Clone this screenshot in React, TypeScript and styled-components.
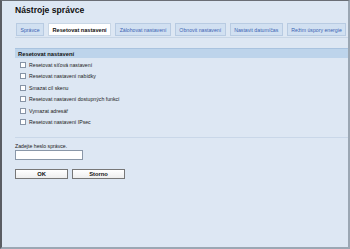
import styled, { createGlobalStyle } from "styled-components";

const GlobalStyle = createGlobalStyle`
  html, body {
    margin: 0;
    padding: 0;
    background: #dde7f3;
  }
  body {
    font-family: "Liberation Sans", Arial, sans-serif;
  }
`;

const Frame = styled.div`
  box-sizing: border-box;
  width: 350px;
  height: 249px;
  background: #dde7f3;
  border-left: 2px solid #5a5d63;
  border-top: 1px solid #6a6e75;
  border-right: 2px solid #9ba7b3;
  border-bottom: 2px solid #9ba7b3;
  padding: 4px 0 0 13px;
  display: flex;
  flex-direction: column;
`;

const Title = styled.h1`
  margin: 0;
  font-size: 8.6px;
  font-weight: bold;
  color: #111;
  line-height: 11px;
  height: 18px;
`;

const TabBar = styled.div`
  display: flex;
  gap: 4px;
  padding-left: 1px;
  height: 14px;
  border-bottom: 1px solid #c8d6e6;
`;

const Tab = styled.div<{ $active?: boolean }>`
  box-sizing: border-box;
  height: 13px;
  padding: 0 3.5px;
  display: flex;
  align-items: center;
  font-size: ${(p) => (p.$active ? "5.6px" : "5.2px")};
  font-weight: ${(p) => (p.$active ? "bold" : "normal")};
  color: ${(p) => (p.$active ? "#111" : "#3b63b3")};
  background: ${(p) => (p.$active ? "#ffffff" : "#d1e0f1")};
  border: 1px solid ${(p) => (p.$active ? "#c9d7e6" : "#b8cbe2")};
  white-space: nowrap;
`;

const SectionBar = styled.div`
  margin-top: 10px;
  height: 9px;
  background: #bdd4eb;
  border-top: 1px solid #a9c3df;
  font-size: 5.8px;
  font-weight: bold;
  color: #111;
  display: flex;
  align-items: center;
  padding-left: 3px;
`;

const List = styled.div`
  display: flex;
  flex-direction: column;
  padding: 1px 0 0 5px;
`;

const Row = styled.label`
  height: 11.5px;
  display: flex;
  align-items: center;
  gap: 3px;
  font-size: 5.2px;
  color: #222;
`;

const Box = styled.span`
  box-sizing: border-box;
  width: 6px;
  height: 6px;
  background: #fff;
  border: 1px solid #8794a6;
`;

const Separator = styled.div`
  margin-top: 9px;
  height: 1px;
  background: #c9d7e8;
`;

const PassLabel = styled.div`
  margin-top: 5px;
  font-size: 5.2px;
  color: #222;
  height: 6px;
  line-height: 6px;
`;

const PassInput = styled.div`
  box-sizing: border-box;
  margin-top: 1px;
  width: 68px;
  height: 10px;
  background: #fff;
  border: 1px solid #8a97a8;
`;

const Buttons = styled.div`
  display: flex;
  gap: 4px;
  margin-top: 9px;
`;

const Button = styled.div`
  box-sizing: border-box;
  width: 53px;
  height: 10px;
  background: linear-gradient(#ffffff, #eeeeee);
  border: 1px solid #777;
  display: flex;
  align-items: center;
  justify-content: center;
  font-size: 5.8px;
  font-weight: bold;
  color: #111;
`;

const tabs = [
  "Správce",
  "Resetovat nastavení",
  "Zálohovat nastavení",
  "Obnovit nastavení",
  "Nastavit datum/čas",
  "Režim úspory energie",
];

const options = [
  "Resetovat síťová nastavení",
  "Resetovat nastavení nabídky",
  "Smazat cíl skenu",
  "Resetovat nastavení dostupných funkcí",
  "Vymazat adresář",
  "Resetovat nastavení IPsec",
];

export default function App() {
  return (
    <>
      <GlobalStyle />
      <Frame>
        <Title>Nástroje správce</Title>
        <TabBar>
          {tabs.map((t, i) => (
            <Tab key={t} $active={i === 1}>
              {t}
            </Tab>
          ))}
        </TabBar>
        <SectionBar>Resetovat nastavení</SectionBar>
        <List>
          {options.map((o) => (
            <Row key={o}>
              <Box />
              {o}
            </Row>
          ))}
        </List>
        <Separator />
        <PassLabel>Zadejte heslo správce.</PassLabel>
        <PassInput />
        <Buttons>
          <Button>OK</Button>
          <Button>Storno</Button>
        </Buttons>
      </Frame>
    </>
  );
}
